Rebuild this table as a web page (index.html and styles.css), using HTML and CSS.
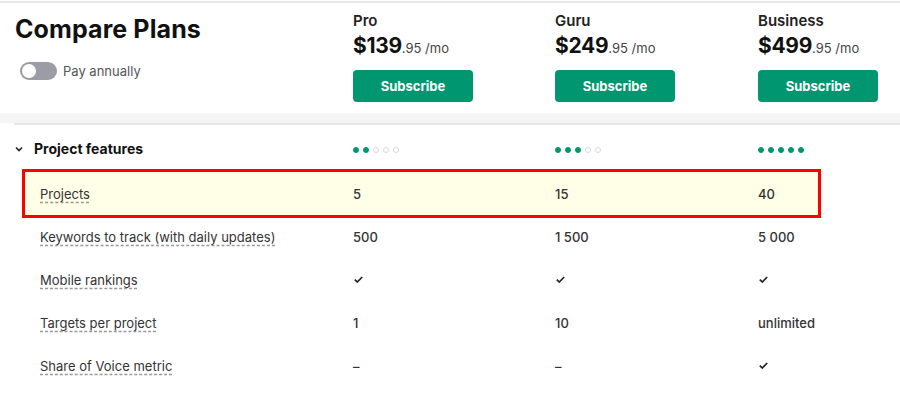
FILE: index.html
```html
<!DOCTYPE html>
<html lang="en">
<head>
    <meta charset="UTF-8">
    <meta name="viewport" content="width=device-width, initial-scale=1.0">
    <title>Compare Plans</title>
    <link rel="stylesheet" href="styles.css">
</head>
<body>
    <div class="header">
        <div class="header-title">
            <h1>Compare Plans</h1>
            <label class="toggle">
                <span class="switch"><span class="knob"></span></span>
                Pay annually
            </label>
        </div>
        <div class="plan">
            <div class="plan-name">Pro</div>
            <div class="plan-price"><b>$139</b>.95 /mo</div>
            <button class="subscribe-btn">Subscribe</button>
        </div>
        <div class="plan">
            <div class="plan-name">Guru</div>
            <div class="plan-price"><b>$249</b>.95 /mo</div>
            <button class="subscribe-btn">Subscribe</button>
        </div>
        <div class="plan">
            <div class="plan-name">Business</div>
            <div class="plan-price"><b>$499</b>.95 /mo</div>
            <button class="subscribe-btn">Subscribe</button>
        </div>
    </div>
    <div class="header-shadow"></div>
    <div class="divider"></div>

    <div class="section-head">
        <div class="section-title">
            <svg class="chevron" width="8" height="6" viewBox="0 0 8 6"><path d="M1 1.5 L4 4.5 L7 1.5" fill="none" stroke="#222" stroke-width="1.6"/></svg>
            Project features
        </div>
        <div class="dots"><i class="on"></i><i class="on"></i><i></i><i></i><i></i></div>
        <div class="dots"><i class="on"></i><i class="on"></i><i class="on"></i><i></i><i></i></div>
        <div class="dots"><i class="on"></i><i class="on"></i><i class="on"></i><i class="on"></i><i class="on"></i></div>
    </div>

    <div class="rows">
        <div class="row highlight">
            <div class="label"><span>Projects</span></div>
            <div class="value">5</div>
            <div class="value">15</div>
            <div class="value">40</div>
        </div>
        <div class="row">
            <div class="label"><span>Keywords to track (with daily updates)</span></div>
            <div class="value">500</div>
            <div class="value">1 500</div>
            <div class="value">5 000</div>
        </div>
        <div class="row">
            <div class="label"><span>Mobile rankings</span></div>
            <div class="value"><svg class="check" width="9" height="7" viewBox="0 0 9 7"><path d="M0.8 3.6 L3.3 6 L8.2 1" fill="none" stroke="#222" stroke-width="1.7"/></svg></div>
            <div class="value"><svg class="check" width="9" height="7" viewBox="0 0 9 7"><path d="M0.8 3.6 L3.3 6 L8.2 1" fill="none" stroke="#222" stroke-width="1.7"/></svg></div>
            <div class="value"><svg class="check" width="9" height="7" viewBox="0 0 9 7"><path d="M0.8 3.6 L3.3 6 L8.2 1" fill="none" stroke="#222" stroke-width="1.7"/></svg></div>
        </div>
        <div class="row">
            <div class="label"><span>Targets per project</span></div>
            <div class="value">1</div>
            <div class="value">10</div>
            <div class="value">unlimited</div>
        </div>
        <div class="row">
            <div class="label"><span>Share of Voice metric</span></div>
            <div class="value">&ndash;</div>
            <div class="value">&ndash;</div>
            <div class="value"><svg class="check" width="9" height="7" viewBox="0 0 9 7"><path d="M0.8 3.6 L3.3 6 L8.2 1" fill="none" stroke="#222" stroke-width="1.7"/></svg></div>
        </div>
    </div>
</body>
</html>
```

FILE: styles.css
```css
body {
    margin: 0;
    padding-top: 1px;
    font-family: Inter, "Noto Sans", sans-serif;
    color: #222;
    background: white;
}
.header {
    display: grid;
    grid-template-columns: 353px 202px 203px 1fr;
    border-top: 2px solid #e6e6e6;
    height: 110px;
}
.header-title {
    padding-left: 15px;
}
h1 {
    margin: 11px 0 0 0;
    font-size: 25px;
    line-height: 30px;
    font-weight: 700;
    color: #111;
    letter-spacing: 0.1px;
}
.toggle {
    display: flex;
    align-items: center;
    gap: 6px;
    margin: 18px 0 0 5px;
    font-size: 13px;
    color: #555;
}
.switch {
    width: 37px;
    height: 18px;
    border-radius: 9px;
    background: #9b9ca6;
    display: flex;
    align-items: center;
    padding: 0 2px;
    box-sizing: border-box;
}
.knob {
    width: 14px;
    height: 14px;
    border-radius: 50%;
    background: white;
}
.plan {
    padding-top: 9px;
}
.plan-name {
    font-size: 15px;
    line-height: 18px;
    font-weight: 600;
}
.plan-price {
    margin-top: 3px;
    font-size: 13px;
    line-height: 26px;
    color: #444;
}
.plan-price b {
    font-size: 21px;
    font-weight: 700;
    letter-spacing: -0.3px;
    color: #111;
}
.subscribe-btn {
    display: block;
    margin-top: 9px;
    width: 120px;
    height: 32px;
    border: none;
    border-radius: 4px;
    background: #00966f;
    color: white;
    font-family: Inter, "Noto Sans", sans-serif;
    font-size: 13px;
    font-weight: 700;
    cursor: pointer;
}
.header-shadow {
    height: 10px;
    background: #f5f5f6;
}
.divider {
    height: 2px;
    margin-left: 14px;
    background: #e5e5ea;
}
.section-head {
    display: grid;
    grid-template-columns: 353px 202px 203px 1fr;
    align-items: center;
    height: 47px;
}
.section-title {
    display: flex;
    align-items: center;
    gap: 11px;
    padding-left: 15px;
    font-size: 14px;
    font-weight: 700;
    color: #111;
}
.dots {
    display: flex;
    gap: 4px;
    padding-top: 2px;
}
.dots i {
    width: 6px;
    height: 6px;
    border-radius: 50%;
    box-sizing: border-box;
    border: 1px solid #d8d9de;
}
.dots i.on {
    background: #00966f;
    border-color: #00966f;
}
.row {
    display: grid;
    grid-template-columns: 328px 202px 203px 60px;
    align-items: center;
    height: 43px;
    margin-left: 25px;
    width: 793px;
    font-size: 13px;
}
.highlight {
    background: #fffee6;
    outline: 3px solid #ff0000;
}
.label {
    padding-left: 15px;
    color: #333;
}
.label span {
    text-decoration: underline dashed #999;
    text-underline-offset: 3px;
}
.value {
    font-weight: 500;
    color: #333;
}
.check {
    display: block;
    margin-left: 1px;
}
```
